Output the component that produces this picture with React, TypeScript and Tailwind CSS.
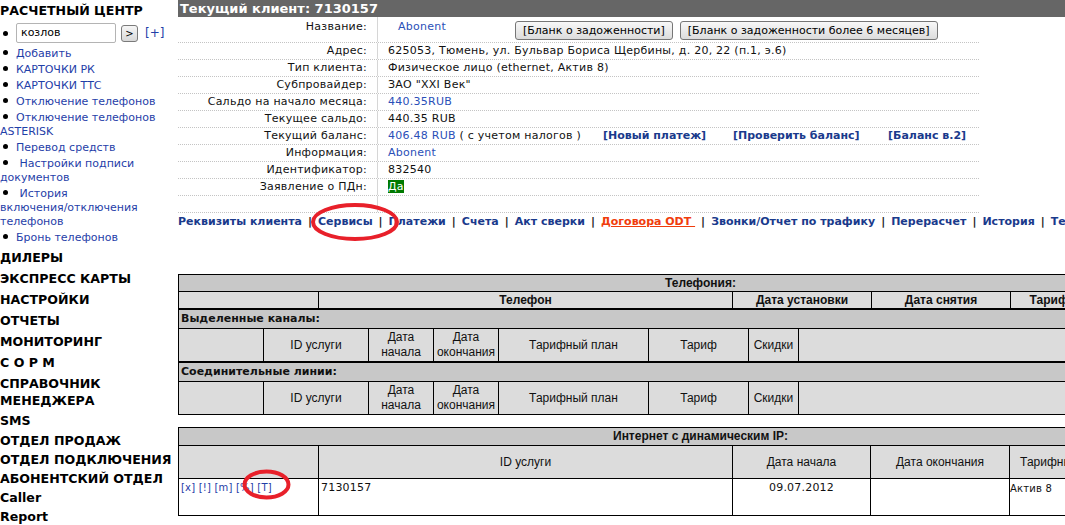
import React from "react";

const V = "font-['DejaVu_Sans',Verdana,sans-serif]";
const A = "font-['Liberation_Sans',Arial,sans-serif]";

const sideLinks: string[][] = [
  ["Добавить"],
  ["КАРТОЧКИ РК"],
  ["КАРТОЧКИ ТТС"],
  ["Отключение телефонов"],
  ["Отключение телефонов", "ASTERISK"],
  ["Перевод средств"],
  [" Настройки подписи", "документов"],
  [" История", "включения/отключения", "телефонов"],
  ["Бронь телефонов"],
];

const bigMenu = [
  "ДИЛЕРЫ",
  "ЭКСПРЕСС КАРТЫ",
  "НАСТРОЙКИ",
  "ОТЧЕТЫ",
  "МОНИТОРИНГ",
  "С О Р М",
];

const lowMenu = [
  "ОТДЕЛ ПРОДАЖ",
  "ОТДЕЛ ПОДКЛЮЧЕНИЯ",
  "АБОНЕНТСКИЙ ОТДЕЛ",
  "Caller",
  "Report",
];

function Bullet() {
  return (
    <span className="inline-block w-[5px] h-[5px] rounded-full bg-black ml-[3px] mr-[8px] align-[2px]" />
  );
}

function Sidebar() {
  return (
    <div className={`w-[178px] shrink-0 ${V} text-[11px]`}>
      <div className="h-[21px] leading-[21px] font-bold text-[12.6px] text-black whitespace-nowrap">
        РАСЧЕТНЫЙ ЦЕНТР
      </div>
      <div className="mt-[2px] h-[20px] flex items-center">
        <Bullet />
        <div className="w-[100px] h-[20px] border border-[#b4b4b4] rounded-[2px] bg-white pl-[4px] leading-[18px] text-black">
          козлов
        </div>
        <div className="ml-[5px] w-[17px] h-[17px] border border-[#7a7a7a] rounded-[3px] bg-gradient-to-b from-[#f6f6f6] to-[#d8d8d8] text-[10px] leading-[15px] text-center text-black">
          &gt;
        </div>
        <span className="ml-[7px] text-[#1f40a8] text-[12px]">[+]</span>
      </div>
      <div className="mt-[4px]">
        {sideLinks.map((lines, i) => (
          <div key={i} className="mb-[2px] leading-[14px] text-[#1f40a8]">
            <Bullet />
            {lines.map((l, j) => (
              <React.Fragment key={j}>
                {j > 0 && <br />}
                <span className="whitespace-pre">{l}</span>
              </React.Fragment>
            ))}
          </div>
        ))}
      </div>
      <div className="mt-[2px] font-bold text-[12.6px] text-black whitespace-nowrap">
        {bigMenu.map((m) => (
          <div key={m} className="h-[21px] leading-[21px]">
            {m}
          </div>
        ))}
        <div className="py-[2px] leading-[17px]">
          СПРАВОЧНИК
          <br />
          МЕНЕДЖЕРА
        </div>
        <div className="h-[20px] leading-[20px]">SMS</div>
        {lowMenu.map((m) => (
          <div key={m} className="h-[19px] leading-[19px]">
            {m}
          </div>
        ))}
      </div>
    </div>
  );
}

const infoRows: { label: string; value: React.ReactNode }[] = [
  {
    label: "Адрес:",
    value: "625053, Тюмень, ул. Бульвар Бориса Щербины, д. 20, 22 (п.1, э.6)",
  },
  { label: "Тип клиента:", value: "Физическое лицо (ethernet, Актив 8)" },
  { label: "Субпровайдер:", value: 'ЗАО "XXI Век"' },
  {
    label: "Сальдо на начало месяца:",
    value: <span className="text-[#2a4fb8]">440.35RUB</span>,
  },
  { label: "Текущее сальдо:", value: "440.35 RUB" },
  {
    label: "Текущий баланс:",
    value: (
      <div className="flex whitespace-nowrap">
        <span className="w-[215px]">
          <span className="text-[#2a4fb8]">406.48 RUB</span> ( с учетом налогов )
        </span>
        <span className="w-[130px] font-bold text-[#1a3a8c] tracking-normal">[Новый платеж]</span>
        <span className="w-[155px] font-bold text-[#1a3a8c] tracking-normal">[Проверить баланс]</span>
        <span className="font-bold text-[#1a3a8c] tracking-normal">[Баланс в.2]</span>
      </div>
    ),
  },
  {
    label: "Информация:",
    value: <span className="text-[#2a4fb8]">Abonent</span>,
  },
  { label: "Идентификатор:", value: "832540" },
  {
    label: "Заявление о ПДн:",
    value: <span className="bg-[#007a00] text-white">Да</span>,
  },
  { label: "", value: "" },
];

function InfoTable() {
  return (
    <div className={`w-[801px] ${V} text-[11px] text-[#111]`}>
      <div className="grid grid-cols-[200px_1fr] h-[26px] border-b border-dotted border-[#c4c4c4]">
        <div className="pr-[10px] pt-[3px] leading-[14px] text-right border-r border-[#d6d6d6] tracking-[0.25px]">
          Название:
        </div>
        <div className="flex">
          <div className="w-[137px] pl-[20px] pt-[3px] leading-[14px] text-[#2a4fb8] tracking-[0.25px]">
            Abonent
          </div>
          <div className="flex gap-[7px] mt-[4px]">
            <button className="h-[19px] px-[7px] border border-[#767676] rounded-[3px] bg-gradient-to-b from-[#f8f8f8] to-[#dcdcdc] leading-[17px] text-black whitespace-nowrap">
              [Бланк о задоженности]
            </button>
            <button className="h-[19px] px-[7px] border border-[#767676] rounded-[3px] bg-gradient-to-b from-[#f8f8f8] to-[#dcdcdc] leading-[17px] text-black whitespace-nowrap">
              [Бланк о задоженности более 6 месяцев]
            </button>
          </div>
        </div>
      </div>
      {infoRows.map((r, i) => (
        <div
          key={i}
          className="grid grid-cols-[200px_1fr] h-[17px] border-b border-dotted border-[#c4c4c4] leading-[16px] tracking-[0.25px]"
        >
          <div className="pr-[10px] text-right border-r border-[#d6d6d6] whitespace-nowrap">
            {r.label}
          </div>
          <div className="pl-[10px] whitespace-nowrap">{r.value}</div>
        </div>
      ))}
    </div>
  );
}

const navItems = [
  "Реквизиты клиента",
  "Сервисы",
  "Платежи",
  "Счета",
  "Акт сверки",
  "Договора ODT",
  "Звонки/Отчет по трафику",
  "Перерасчет",
  "История",
  "Телефоны",
];

function Nav() {
  return (
    <div className={`mt-[2px] h-[14px] leading-[14px] ${V} text-[11px] font-bold whitespace-nowrap`}>
      {navItems.map((n, i) => (
        <React.Fragment key={n}>
          {i > 0 && <span className="mx-[6px] text-[#222]">|</span>}
          {n === "Договора ODT" ? (
            <span className="text-[#f03c0c] underline whitespace-pre">{n + " "}</span>
          ) : (
            <span className="text-[#1a3a8c]">{n}</span>
          )}
        </React.Fragment>
      ))}
    </div>
  );
}

function SubHeader() {
  const cell = "border-l border-black flex items-center justify-center text-center";
  return (
    <div className={`grid grid-cols-[84px_105px_65px_65px_150px_100px_50px_1fr] h-[32px] bg-[#dcdcdc] ${A} text-[12px] leading-[15px] text-[#111]`}>
      <div />
      <div className={cell}>ID услуги</div>
      <div className={cell}>
        Дата
        <br />
        начала
      </div>
      <div className={cell}>
        Дата
        <br />
        окончания
      </div>
      <div className={cell}>Тарифный план</div>
      <div className={cell}>Тариф</div>
      <div className={cell}>Скидки</div>
      <div className="border-l border-black" />
    </div>
  );
}

function Telephony() {
  const hcell = "border-l border-black text-center whitespace-nowrap";
  return (
    <div className="mt-[45px] w-[1045px] border border-black">
      <div className={`h-[17px] leading-[17px] bg-[#c8c8c8] border-b border-black text-center ${A} text-[12px] font-bold text-[#111]`}>
        Телефония:
      </div>
      <div className={`grid grid-cols-[139px_414px_139px_139px_134px_1fr] h-[18px] leading-[16px] bg-[#dcdcdc] border-b-2 border-black ${A} text-[12px] font-bold text-[#111]`}>
        <div />
        <div className={hcell}>Телефон</div>
        <div className={hcell}>Дата установки</div>
        <div className={hcell}>Дата снятия</div>
        <div className={hcell}>Тарифный план</div>
        <div className={hcell}>Скидки</div>
      </div>
      <div className={`h-[19px] leading-[18px] pl-[2px] bg-[#c8c8c8] border-b border-black ${V} text-[11px] font-bold text-[#111]`}>
        Выделенные каналы:
      </div>
      <div className="border-b-2 border-black">
        <SubHeader />
      </div>
      <div className={`h-[19px] leading-[18px] pl-[2px] bg-[#c8c8c8] border-b border-black ${V} text-[11px] font-bold text-[#111]`}>
        Соединительные линии:
      </div>
      <SubHeader />
    </div>
  );
}

function Internet() {
  const hcell = "border-l border-black flex items-center justify-center whitespace-nowrap";
  return (
    <div className="mt-[12px] w-[1045px] border border-black">
      <div className={`h-[18px] leading-[17px] bg-[#c8c8c8] border-b border-black text-center ${A} text-[12px] font-bold text-[#111]`}>
        Интернет с динамическим IP:
      </div>
      <div className={`grid grid-cols-[139px_414px_138px_139px_110px_1fr] h-[33px] bg-[#dcdcdc] border-b border-black ${A} text-[12px] text-[#111]`}>
        <div />
        <div className={hcell}>ID услуги</div>
        <div className={hcell}>Дата начала</div>
        <div className={hcell}>Дата окончания</div>
        <div className={hcell}>Тарифный план</div>
        <div className={hcell}>Скидки</div>
      </div>
      <div className={`grid grid-cols-[139px_414px_138px_139px_110px_1fr] h-[36px] bg-white ${V} text-[11px] text-[#111] tracking-[0.2px]`}>
        <div className="pl-[2px] pt-[1px] text-[10px] text-[#1f40a8] whitespace-nowrap">
          [x] [!] [m] [%] [T]
        </div>
        <div className="border-l border-black pl-[2px] pt-[1px]">7130157</div>
        <div className="border-l border-black text-center pt-[1px]">09.07.2012</div>
        <div className="border-l border-black" />
        <div className="border-l border-black text-[10px] pt-[2px]">Актив 8</div>
        <div className="border-l border-black" />
      </div>
    </div>
  );
}

export default function App() {
  return (
    <div className="relative w-[1065px] h-[525px] overflow-hidden bg-white flex">
      <Sidebar />
      <div className="w-[887px] shrink-0">
        <div className={`h-[17px] leading-[17px] bg-[#666666] pl-[2px] text-white font-bold text-[13px] ${V} whitespace-nowrap`}>
          Текущий клиент: 7130157
        </div>
        <InfoTable />
        <Nav />
        <Telephony />
        <Internet />
      </div>
      <svg className="absolute left-0 top-0 pointer-events-none" width="1065" height="525">
        <ellipse cx="355" cy="222" rx="42" ry="17" fill="none" stroke="#e8202a" strokeWidth="4" />
        <ellipse cx="266.5" cy="484.5" rx="22" ry="13" fill="none" stroke="#e8202a" strokeWidth="4" />
      </svg>
    </div>
  );
}
